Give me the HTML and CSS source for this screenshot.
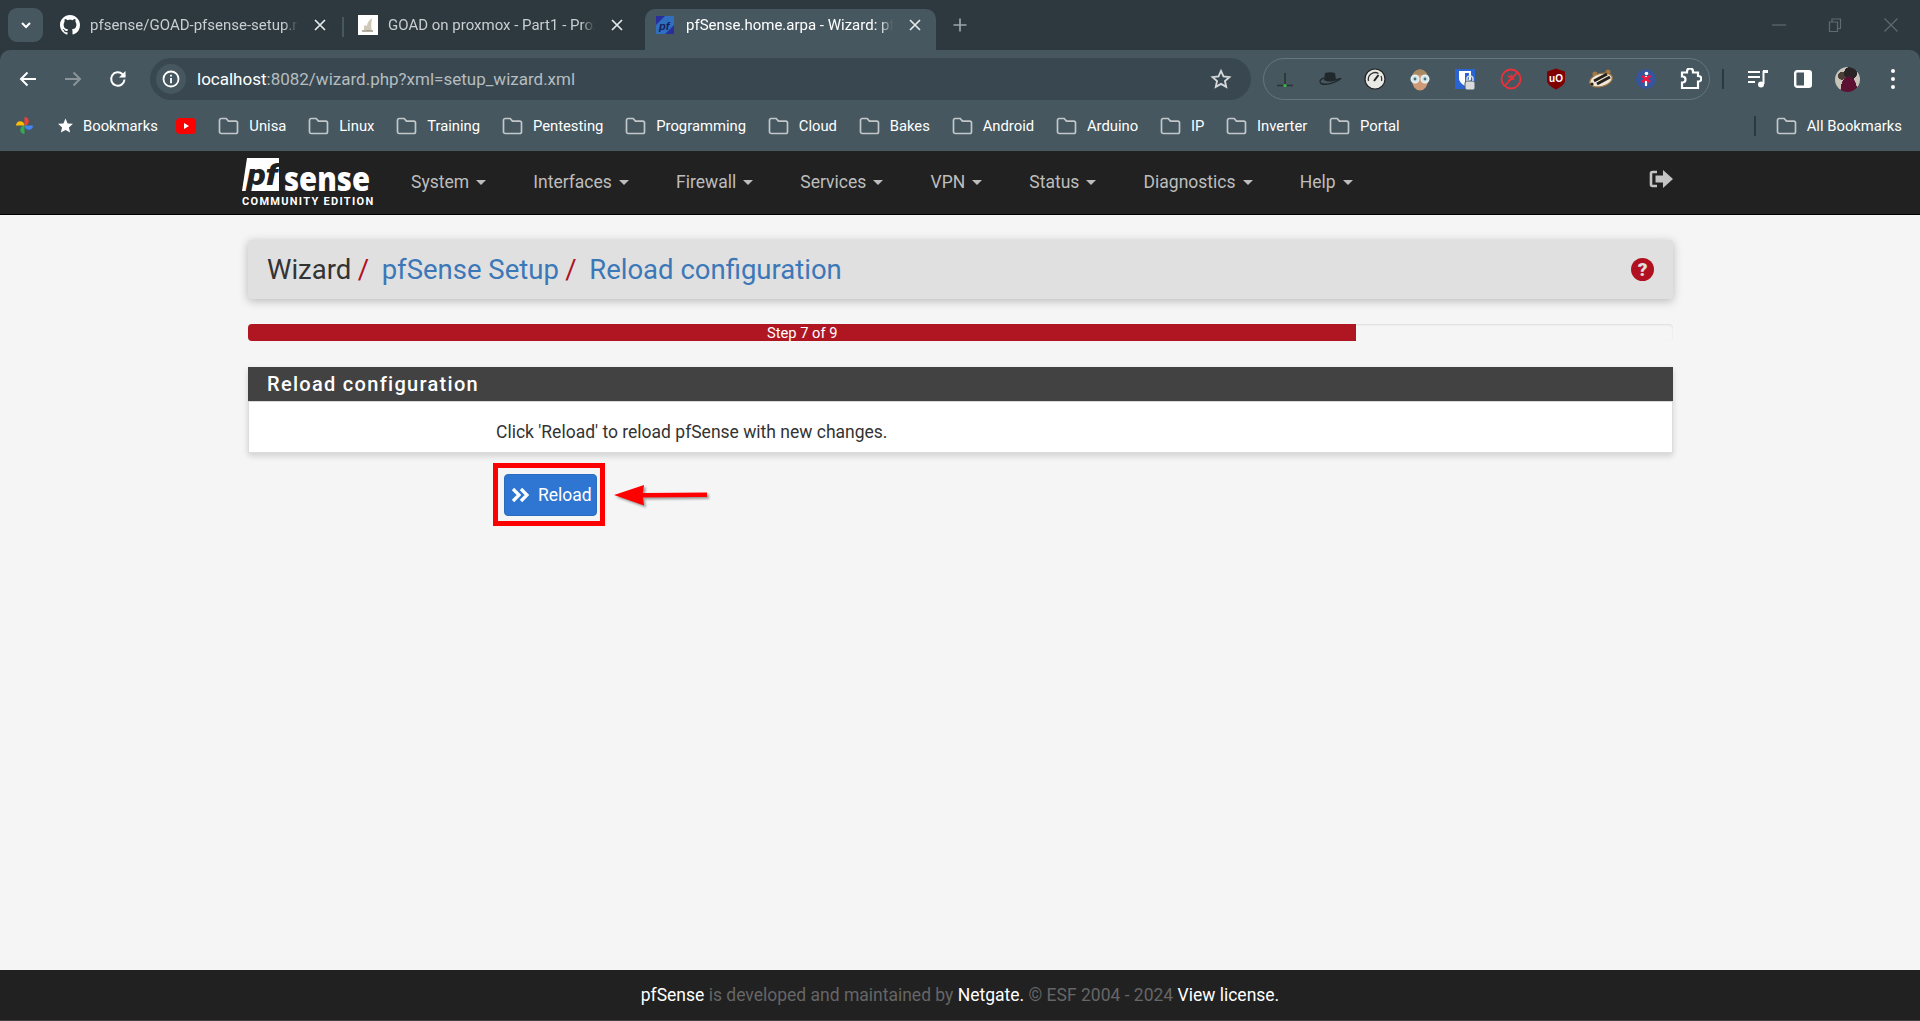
FILE: index.html
```html
<!DOCTYPE html>
<html lang="en">
<head>
  <meta charset="UTF-8">
  <title>pfSense.home.arpa - Wizard: pfSense Setup: Reload configuration</title>
  <link rel="stylesheet" href="styles.css">
</head>
<body>
  <svg class="defs" width="0" height="0">
    <symbol id="folder" viewBox="0 0 21 18"><path d="M1.500 3.200a1.700 1.700 0 0 1 1.700-1.700h5l2.200 2.600h7.400a1.700 1.700 0 0 1 1.700 1.700v9a1.700 1.700 0 0 1-1.700 1.700H3.200a1.700 1.700 0 0 1-1.700-1.700z" fill="none" stroke="#c2c7ca" stroke-width="1.700"/></symbol>
    <symbol id="close" viewBox="0 0 14 14"><path d="M2 2l10 10M12 2 2 12" stroke="currentColor" stroke-width="1.700"/></symbol>
  </svg>

  <header class="chrome">
    <div class="tabstrip">
      <button class="tab-search"><svg width="14" height="14" viewBox="0 0 14 14"><path d="M3 5l4 4 4-4" fill="none" stroke="#fff" stroke-width="2"/></svg></button>
      <div class="tab tab-first">
        <svg class="favicon" viewBox="0 0 16 16"><path fill="#fff" d="M8 0C3.580 0 0 3.580 0 8c0 3.540 2.290 6.530 5.470 7.590.4.070.55-.17.55-.38 0-.19-.01-.82-.01-1.490-2.010.37-2.530-.49-2.690-.94-.09-.23-.48-.94-.82-1.130-.28-.15-.68-.52-.01-.53.63-.01 1.080.58 1.230.82.72 1.210 1.870.87 2.330.66.07-.52.28-.87.51-1.070-1.780-.2-3.640-.89-3.640-3.950 0-.87.31-1.590.82-2.150-.08-.2-.36-1.020.08-2.120 0 0 .67-.21 2.200.82.64-.18 1.320-.27 2-.27s1.360.09 2 .27c1.530-1.040 2.200-.82 2.200-.82.44 1.100.16 1.920.08 2.120.51.56.82 1.270.82 2.150 0 3.070-1.870 3.750-3.650 3.950.29.25.54.73.54 1.480 0 1.070-.01 1.930-.01 2.200 0 .21.15.46.55.38A8.010 8.010 0 0 0 16 8c0-4.420-3.580-8-8-8z"/></svg>
        <span class="tab-title">pfsense/GOAD-pfsense-setup.md at main</span>
        <svg class="tab-close"><use href="#close"/></svg>
      </div>
      <div class="tab">
        <svg class="favicon" viewBox="0 0 20 20"><rect width="20" height="20" fill="#fff"/><path d="M6 15c3 1 6 1 8 0-1-1-1-5 0-12-3 2-5 5-5 8-1-1-2-1-3 0z" fill="#cfc8b4"/><path d="M4 16h11" stroke="#6b6250" stroke-width="1"/></svg>
        <span class="tab-title">GOAD on proxmox - Part1 - Proxmox</span>
        <svg class="tab-close"><use href="#close"/></svg>
      </div>
      <div class="tab tab-active">
        <svg class="favicon" viewBox="0 0 18 18"><rect width="18" height="18" fill="#2a2f9e"/><path d="M18 0v9L9 18H0V9L9 0z" fill="#2f6fbe"/><text x="3" y="14" class="favicon-pf">pf</text></svg>
        <span class="tab-title">pfSense.home.arpa - Wizard: pfSense</span>
        <svg class="tab-close"><use href="#close"/></svg>
      </div>
      <svg class="tab-new" width="20" height="20" viewBox="0 0 20 20"><path d="M10 3.500v13M3.500 10h13" stroke="#9aa4a9" stroke-width="1.700"/></svg>
      <div class="window-controls">
        <svg width="14" height="14" viewBox="0 0 14 14"><path d="M0 7h14" stroke="#5f6a70" stroke-width="1.200"/></svg>
        <svg width="14" height="14" viewBox="0 0 14 14"><path d="M1.500 4h8v9.500h-8zM4 4V1h8.500v9.500h-3" fill="none" stroke="#5f6a70" stroke-width="1.200"/></svg>
        <svg width="14" height="14" viewBox="0 0 14 14"><path d="M.5.5l13 13M13.500.5l-13 13" stroke="#5f6a70" stroke-width="1.200"/></svg>
      </div>
    </div>

    <div class="toolbar">
      <span class="tool"><svg width="20" height="20" viewBox="0 0 20 20"><path d="M18 10H3.500M9.500 3.500 3 10l6.500 6.500" fill="none" stroke="#fff" stroke-width="2"/></svg></span>
      <span class="tool"><svg width="20" height="20" viewBox="0 0 20 20"><path d="M2 10h14.500M10.500 3.500 17 10l-6.500 6.500" fill="none" stroke="#8a9499" stroke-width="2"/></svg></span>
      <span class="tool tool-last"><svg width="20" height="20" viewBox="0 0 20 20"><path d="M16.500 10.500a6.700 6.700 0 1 1-1.900-5.200L17 7.500" fill="none" stroke="#fff" stroke-width="2"/><path d="M17.500 2v6.500H11z" fill="#fff"/></svg></span>
      <div class="omnibox">
        <span class="site-info"><svg width="18" height="18" viewBox="0 0 18 18"><circle cx="9" cy="9" r="7.500" fill="none" stroke="#fff" stroke-width="1.800"/><path d="M9 8v5.200M9 4.700v1.800" stroke="#fff" stroke-width="1.800"/></svg></span>
        <span class="url"><span class="url-host">localhost</span>:8082/wizard.php?xml=setup_wizard.xml</span>
        <svg class="url-star" width="22" height="22" viewBox="0 0 24 24"><path d="M12 3.200l2.700 6 6.500.7-4.900 4.300 1.400 6.400L12 17.300l-5.700 3.300 1.400-6.400L2.800 9.900l6.500-.7z" fill="none" stroke="#d5d9db" stroke-width="2"/></svg>
      </div>
      <div class="extensions">
        <span class="ext"><svg width="20" height="24" viewBox="0 0 20 24"><path d="M10 6v13" stroke="#1d2a22" stroke-width="1.200"/><path d="M2 18.500h16" stroke="#1d2a22" stroke-width="1.600" opacity=".7"/><circle cx="10" cy="18.500" r="1.600" fill="#35c24a"/></svg></span>
        <span class="ext"><svg width="24" height="20" viewBox="0 0 24 20"><path d="M7 4c3-1 7-1 10 0l1 7c-3 2-9 2-12 0z" fill="#20282c"/><path d="M6 9C2 10 1 13 3 14.500c4 2 14 0 20-5-4 1-5 1-6 1.500" fill="none" stroke="#20282c" stroke-width="1.400"/></svg></span>
        <span class="ext"><svg width="22" height="22" viewBox="0 0 22 22"><circle cx="11" cy="11" r="10" fill="#e9e9e6" stroke="#222" stroke-width="1.200"/><path d="M10 13l4.500-6" stroke="#222" stroke-width="2"/><path d="M4.500 13a6.800 6.800 0 0 1 10-7.500M17 8a6.800 6.800 0 0 1 .6 5" fill="none" stroke="#333" stroke-width="1.300"/></svg></span>
        <span class="ext"><svg width="24" height="26" viewBox="0 0 24 26"><ellipse cx="12" cy="14" rx="8" ry="10.500" fill="#cf9a78"/><path d="M4 11C5 1 19 1 20 11c-4-3-12-3-16 0z" fill="#a78a62"/><circle cx="7" cy="13" r="3.800" fill="#cfe6ea" stroke="#e8f1f2" stroke-width="1.400"/><circle cx="17" cy="13" r="3.800" fill="#cfe6ea" stroke="#e8f1f2" stroke-width="1.400"/><circle cx="7" cy="13" r="1.400" fill="#4f6f78"/><circle cx="17" cy="13" r="1.400" fill="#4f6f78"/></svg></span>
        <span class="ext"><svg width="22" height="24" viewBox="0 0 22 24"><path d="M1 2h20v20H1z" fill="#2a63d4"/><path d="M5 4h12v7c0 4-3 6-6 8-3-2-6-4-6-8z" fill="#fff"/><path d="M11 6h4v5c0 2-2 4-4 5z" fill="#2a63d4"/><rect x="11" y="14" width="10" height="9" rx="2" fill="#d8dadb" stroke="#46575f"/><path d="M13 14v-2a3 3 0 0 1 6 0v2" fill="none" stroke="#d8dadb" stroke-width="1.500"/></svg></span>
        <span class="ext"><svg width="22" height="22" viewBox="0 0 22 22"><circle cx="11" cy="11" r="9.500" fill="none" stroke="#ee2f3a" stroke-width="1.800"/><path d="M4.500 18 18 4M8 8l5 3-5 1.500M11.500 6.500v5" fill="none" stroke="#ee2f3a" stroke-width="1.800"/></svg></span>
        <span class="ext"><svg width="20" height="22" viewBox="0 0 20 22"><path d="M10 .5l9 3v9c0 4-5 7-9 9-4-2-9-5-9-9v-9z" fill="#800000"/><text x="10" y="14" class="ext-ub">uO</text></svg></span>
        <span class="ext"><svg width="26" height="20" viewBox="0 0 26 20"><circle cx="7" cy="5" r="2.600" fill="#a5773f"/><circle cx="20" cy="3" r="2.600" fill="#a5773f"/><ellipse cx="13" cy="11" rx="11.500" ry="6.500" transform="rotate(-15 13 11)" fill="#efe8da" stroke="#a5773f" stroke-width="1.200"/><path d="M19 5 6 12M22 8 9 15" stroke="#26211b" stroke-width="3"/><circle cx="4" cy="15" r="1.600" fill="#26211b"/></svg></span>
        <span class="ext"><svg width="22" height="22" viewBox="0 0 22 22"><circle cx="11" cy="11" r="10" fill="#35569c"/><circle cx="11.500" cy="5.500" r="1.800" fill="#fff"/><path d="M11 8v10" stroke="#fff" stroke-width="2.200"/><path d="M7 8l8 6M15.500 7.500 7 14" stroke="#f0163f" stroke-width="2.600"/></svg></span>
        <span class="ext"><svg width="22" height="22" viewBox="0 0 22 22"><path d="M2 4.500h5V3.500a3 3 0 0 1 6 0v1h5V8h.5a2.800 2.800 0 0 1 0 5.600H18V20H2v-5.500h.5a3 3 0 0 0 0-6H2z" fill="none" stroke="#fff" stroke-width="2.200"/></svg></span>
      </div>
      <span class="tool-sep"></span>
      <span class="tool tool-end"><svg width="20" height="20" viewBox="0 0 20 20"><path d="M0 3h12M0 8h12M0 13h7" stroke="#fff" stroke-width="2"/><path d="M15.500 2v13" stroke="#fff" stroke-width="2"/><circle cx="13" cy="15.500" r="3" fill="#fff"/><path d="M15 1h5v3h-5z" fill="#fff"/></svg></span>
      <span class="tool"><svg width="18" height="18" viewBox="0 0 18 18"><rect x="1.200" y="1.200" width="15.600" height="15.600" rx="2" fill="none" stroke="#fff" stroke-width="2.400"/><rect x="10" y="1.500" width="7" height="15" fill="#fff"/></svg></span>
      <span class="tool"><span class="avatar"></span></span>
      <span class="tool"><svg width="8" height="22" viewBox="0 0 8 22"><circle cx="4" cy="3" r="2" fill="#fff"/><circle cx="4" cy="11" r="2" fill="#fff"/><circle cx="4" cy="19" r="2" fill="#fff"/></svg></span>
    </div>

    <div class="bookmarks">
      <span class="bm-pin"><svg width="19" height="19" viewBox="0 0 20 20"><path d="M10 10V1a4.500 4.500 0 0 1 0 9z" fill="#ea4335"/><path d="M10 10h9a4.500 4.500 0 0 1-9 0z" fill="#4285f4"/><path d="M10 10v9a4.500 4.500 0 0 1 0-9z" fill="#34a853"/><path d="M10 10H1a4.500 4.500 0 0 1 9 0z" fill="#fbbc04"/></svg></span>
      <span class="bm bm-star"><svg width="17" height="17" viewBox="0 0 24 24"><path d="M12 2l3 7 7.500.7-5.700 5 1.700 7.300L12 18.200 5.500 22l1.700-7.300-5.700-5L9 9z" fill="#fff"/></svg>Bookmarks</span>
      <span class="bm-pin bm-yt"><svg width="20" height="16" viewBox="0 0 20 16"><rect width="20" height="16" rx="4" fill="#f00"/><path d="M8 5l5 3-5 3z" fill="#fff"/></svg></span>
      <span class="bm"><svg class="bm-folder"><use href="#folder"/></svg>Unisa</span>
      <span class="bm"><svg class="bm-folder"><use href="#folder"/></svg>Linux</span>
      <span class="bm"><svg class="bm-folder"><use href="#folder"/></svg>Training</span>
      <span class="bm"><svg class="bm-folder"><use href="#folder"/></svg>Pentesting</span>
      <span class="bm"><svg class="bm-folder"><use href="#folder"/></svg>Programming</span>
      <span class="bm"><svg class="bm-folder"><use href="#folder"/></svg>Cloud</span>
      <span class="bm"><svg class="bm-folder"><use href="#folder"/></svg>Bakes</span>
      <span class="bm"><svg class="bm-folder"><use href="#folder"/></svg>Android</span>
      <span class="bm"><svg class="bm-folder"><use href="#folder"/></svg>Arduino</span>
      <span class="bm"><svg class="bm-folder"><use href="#folder"/></svg>IP</span>
      <span class="bm"><svg class="bm-folder"><use href="#folder"/></svg>Inverter</span>
      <span class="bm"><svg class="bm-folder"><use href="#folder"/></svg>Portal</span>
      <span class="bm-sep"></span>
      <span class="bm"><svg class="bm-folder"><use href="#folder"/></svg>All Bookmarks</span>
    </div>
  </header>

  <nav class="navbar">
    <div class="logo">
      <svg width="132" height="38" viewBox="0 0 132 38">
        <path d="M5 0h32v33H0z" fill="#fff"/>
        <text x="5" y="27" textLength="31" lengthAdjust="spacingAndGlyphs" class="logo-pf">pf</text>
        <text x="42" y="33" textLength="86" lengthAdjust="spacingAndGlyphs" class="logo-sense">sense</text>
      </svg>
      <span class="logo-edition">COMMUNITY EDITION</span>
    </div>
    <ul class="menu">
      <li>System<i class="caret"></i></li>
      <li>Interfaces<i class="caret"></i></li>
      <li>Firewall<i class="caret"></i></li>
      <li>Services<i class="caret"></i></li>
      <li>VPN<i class="caret"></i></li>
      <li>Status<i class="caret"></i></li>
      <li>Diagnostics<i class="caret"></i></li>
      <li>Help<i class="caret"></i></li>
    </ul>
    <svg class="logout" width="24" height="18" viewBox="0 0 24 18"><path d="M8 2H3.500A1.500 1.500 0 0 0 2 3.500v11A1.500 1.500 0 0 0 3.500 16H8" fill="none" stroke="#c4c4c4" stroke-width="2.600"/><path d="M6.500 5.500H14V0l10 9-10 9v-5.500H6.500z" fill="#c4c4c4"/></svg>
  </nav>

  <main class="page">
    <div class="page-header">
      <ol class="crumbs">
        <li>Wizard</li>
        <li><a href="#">pfSense Setup</a></li>
        <li><a href="#">Reload configuration</a></li>
      </ol>
      <span class="help-icon">?</span>
    </div>

    <div class="progress">
      <div class="progress-bar" style="width: 77.78%">Step 7 of 9</div>
    </div>

    <section class="panel">
      <h2 class="panel-title">Reload configuration</h2>
      <div class="panel-body">
        <p class="panel-text">Click 'Reload' to reload pfSense with new changes.</p>
      </div>
    </section>

    <div class="actions">
      <div class="marked">
        <button class="btn">
          <svg width="18" height="16" viewBox="0 0 18 16"><path d="M2 2 8 8l-6 6M10 2l6 6-6 6" fill="none" stroke="#fff" stroke-width="3.200"/></svg>
          Reload
        </button>
        <svg class="arrow" width="100" height="32" viewBox="0 0 100 32"><path d="M1 11 31 1l-1 8 64-.5V13l-64 .5 1 8z" fill="#f00"/></svg>
      </div>
    </div>
  </main>

  <footer class="footer">
    <a href="#">pfSense</a> is developed and maintained by <a href="#">Netgate.</a> © ESF 2004 - 2024 <a href="#">View license.</a>
  </footer>
</body>
</html>
```

FILE: styles.css
```css
* { box-sizing: border-box; }
html, body { height: 100%; }
body { margin: 0; min-height: 100vh; display: flex; flex-direction: column; background: #f5f5f5; color: #333; font-family: Roboto, "Liberation Sans", sans-serif; font-size: 17.5px; overflow: hidden; }
a { color: inherit; text-decoration: none; }
.defs { position: absolute; }

/* browser frame */
.chrome { background: #2e383f; color: #fff; }
.tabstrip { height: 50px; display: flex; align-items: flex-end; padding-left: 8px; }
.tab-search { align-self: flex-start; width: 35px; height: 34px; margin: 8px 5px 0 0; border: 0; border-radius: 9px; background: #46575f; display: flex; align-items: center; justify-content: center; padding: 0; }
.tab { width: 297px; height: 41px; display: flex; align-items: center; padding: 0 14px 9px; font-size: 15px; color: #c9ced1; position: relative; }
.tab-first { width: 296px; padding-left: 12px; }
.tab-first::after { content: ""; position: absolute; right: 0; top: 8px; height: 20px; width: 2px; background: #46575f; }
.tab-active { width: 291px; margin-left: 4px; padding: 0 11px 9px; background: #46575f; color: #fff; border-radius: 10px 10px 0 0; }
.favicon { width: 20px; height: 20px; flex: none; margin-right: 10px; }
.tab-active .favicon { width: 18px; height: 18px; margin-right: 12px; }
.favicon-pf { font: italic bold 11px "Liberation Sans", sans-serif; fill: #15205a; }
.tab-title { flex: 1; margin-right: 12px; white-space: nowrap; overflow: hidden; -webkit-mask-image: linear-gradient(to left, transparent, #000 14px); mask-image: linear-gradient(to left, transparent, #000 14px); }
.tab-close { width: 20px; height: 14px; flex: none; color: #e6e9ea; }
.tab-new { align-self: flex-start; margin: 15px 0 0 14px; }
.window-controls { align-self: flex-start; margin: 18px 22px 0 auto; display: flex; gap: 42px; }

.toolbar { height: 58px; background: #46575f; border-radius: 10px 10px 0 0; display: flex; align-items: center; padding: 0 5px; }
.tool { width: 45px; height: 42px; flex: none; display: flex; align-items: center; justify-content: center; }
.tool-last { margin-right: 10px; }
.tool-end { margin-left: 11px; }
.omnibox { flex: 1; height: 42px; display: flex; align-items: center; padding: 0 19px 0 6px; background: #394850; border-radius: 21px; margin-right: 12px; }
.site-info { width: 30px; height: 30px; border-radius: 50%; background: #46575f; display: flex; align-items: center; justify-content: center; margin-right: 11px; }
.url { flex: 1; font-size: 17px; color: #b5bdc1; }
.url-host { color: #fff; }
.extensions { width: 447px; height: 42px; flex: none; display: flex; border: 1px solid #66767e; border-radius: 21px; }
.ext { flex: none; width: 45.200px; display: flex; align-items: center; justify-content: center; }
.ext:first-child { margin-left: -2px; }
.ext-ub { font: bold 10px "Liberation Sans", sans-serif; fill: #fff; text-anchor: middle; }
.tool-sep { width: 2px; height: 20px; margin-left: 12px; background: #2e383f; flex: none; }
.avatar { width: 25px; height: 25px; border-radius: 50%; background: radial-gradient(ellipse at 55% 95%, #5c1133 0 42%, transparent 43%), radial-gradient(circle at 62% 25%, #2b2427 0 26%, transparent 27%), radial-gradient(circle at 28% 35%, #4a3f34 0 16%, transparent 17%), #c8c4ba; }

.bookmarks { height: 43px; padding: 0 18px 8px 15px; background: #46575f; display: flex; align-items: center; font-size: 14.800px; }
.bm { display: flex; align-items: center; white-space: nowrap; margin-right: 21.800px; }
.bm-pin { display: flex; margin-right: 23px; }
.bm-yt { margin-right: 22px; }
.bm-star { margin-right: 18.500px; }
.bm-star svg { margin-right: 9px; }
.bm-folder { width: 21px; height: 18px; margin-right: 10px; }
.bm-sep { width: 2px; height: 20px; background: #2e383f; margin: 0 20px 0 auto; }
.bm:last-child { margin-right: 0; }

/* pfSense navbar */
.navbar { height: 64px; flex: none; display: flex; align-items: center; padding: 0 247px 0 242px; background: #212121; border-bottom: 1px solid #000; color: #bdbdbd; }
.logo { width: 132px; display: flex; flex-direction: column; color: #fff; }
.logo-pf { font: italic 900 30px Roboto, sans-serif; fill: #212121; }
.logo-sense { font: 800 33px "Open Sans", sans-serif; fill: #fff; }
.logo-edition { font-size: 11px; font-weight: 700; letter-spacing: 1.300px; white-space: nowrap; line-height: 11px; }
.menu { list-style: none; display: flex; gap: 47.200px; margin: -2px 0 0 37px; padding: 0; flex: 1; }
.caret { display: inline-block; margin-left: 7px; vertical-align: middle; border-top: 5px solid #bdbdbd; border-left: 5px solid transparent; border-right: 5px solid transparent; }
.logout { margin-top: -8px; }

/* page */
.page { flex: 1; padding: 25px 247px 0 248px; }
.page-header { height: 59px; display: flex; align-items: center; justify-content: space-between; padding: 0 19px; background: #e0e0e0; border-radius: 3px; box-shadow: 0 2px 10px rgba(0, 0, 0, .25); }
.crumbs { list-style: none; display: flex; margin: 0; padding: 0; font-size: 27.500px; color: #333; }
.crumbs li + li::before { content: "/"; color: #b0101f; padding: 0 12.500px 0 6.500px; }
.crumbs a { color: #3c78b8; }
.help-icon { width: 23px; height: 23px; border-radius: 50%; background: #b0101f; color: #e0e0e0; font-size: 19px; font-weight: 900; line-height: 23px; text-align: center; }
.progress { height: 17px; margin: 25px 0 26px; background: #f5f5f5; border-radius: 4px; box-shadow: inset 0 1px 2px rgba(0, 0, 0, .1); overflow: hidden; }
.progress-bar { height: 17px; background: #b01622; color: #fff; font-size: 14.700px; line-height: 18px; text-align: center; }
.panel { background: #fff; box-shadow: 0 3px 6px rgba(0, 0, 0, .15); border: 1px solid #ddd; border-top: 0; }
.panel-title { height: 35px; margin: 0 -1px; padding: 0 19px; background: #424242; color: #fff; font-size: 20px; font-weight: 500; letter-spacing: 1.300px; line-height: 35px; border-bottom: 1px solid #d8d8d8; }
.panel-body { height: 50px; display: grid; grid-template-columns: 247px 1fr; align-items: center; padding-top: 10px; }
.panel-text { grid-column: 2; margin: 0; }
.actions { padding: 21px 0 0 256px; }
.marked { position: relative; width: 93px; height: 42px; }
.marked::after { content: ""; position: absolute; inset: -11px -8px -10px -11px; border: 5px solid #f00; pointer-events: none; }
.btn { width: 93px; height: 42px; display: flex; align-items: center; gap: 9px; padding: 0 0 0 6px; border: 1px solid #2a6cc0; border-radius: 4px; background: #2e76d2; color: #fff; font: 17.500px Roboto, sans-serif; }
.arrow { position: absolute; left: 109px; top: 10px; filter: drop-shadow(2px 2px 1px rgba(0, 0, 0, .35)); }

.footer { height: 51px; flex: none; background: #212121; border-bottom: 1px solid #424242; color: #666; line-height: 50px; text-align: center; }
.footer a { color: #fff; }
```
